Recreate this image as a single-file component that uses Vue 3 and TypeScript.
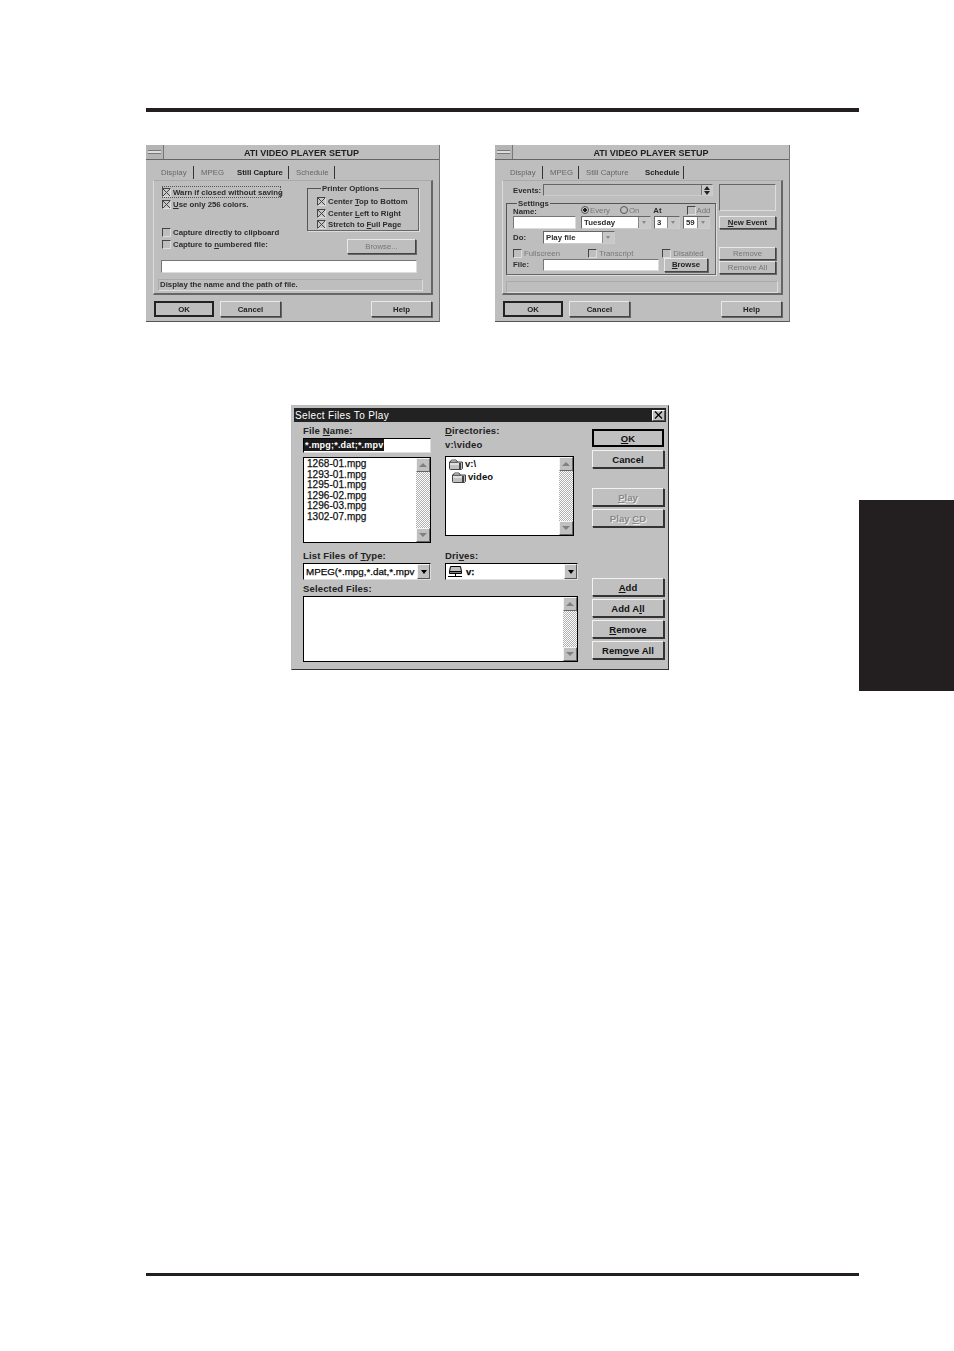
<script setup lang="ts">
const files: string[] = ['1268-01.mpg','1293-01.mpg','1295-01.mpg','1296-02.mpg','1296-03.mpg','1302-07.mpg']
</script>

<template>
  <div class="page">
    <div class="content">
      <div class="rule top-rule"></div>

      <div class="setup-row">
        <!-- Still capture -->
        <section class="setup">
          <header class="s-title"><span class="s-menu"><i></i></span><span class="s-caption">ATI VIDEO PLAYER SETUP</span></header>
          <nav class="s-tabs">
            <span class="tab t1">Display</span><span class="tab t2 plain">MPEG</span><span class="tab t3 on">Still Capture</span><span class="tab t4 last">Schedule</span>
          </nav>
          <div class="s-panel capture">
            <div class="cap-top">
              <div class="cap-left">
                <label class="chk focus"><b class="box x"></b>Warn if closed without saving</label>
                <label class="chk"><b class="box x"></b><span><u>U</u>se only 256 colors.</span></label>
                <div class="cap-space"></div>
                <label class="chk"><b class="box"></b>Capture directly to clipboard</label>
                <label class="chk"><b class="box"></b><span>Capture to <u>n</u>umbered file:</span></label>
              </div>
              <div class="cap-right">
                <fieldset class="group printer">
                  <legend>Printer Options</legend>
                  <label class="chk"><b class="box x"></b><span>Center <u>T</u>op to Bottom</span></label>
                  <label class="chk"><b class="box x"></b><span>Center <u>L</u>eft to Right</span></label>
                  <label class="chk"><b class="box x"></b><span>Stretch to <u>F</u>ull Page</span></label>
                </fieldset>
                <span class="s-btn browse dim">Browse...</span>
              </div>
            </div>
            <div class="field cap-field"></div>
            <div class="status">Display the name and the path of file.</div>
          </div>
          <footer class="s-foot"><span class="s-btn def w60">OK</span><span class="s-btn w61">Cancel</span><span class="spacer"></span><span class="s-btn w61">Help</span></footer>
        </section>

        <!-- Schedule -->
        <section class="setup second">
          <header class="s-title"><span class="s-menu"><i></i></span><span class="s-caption">ATI VIDEO PLAYER SETUP</span></header>
          <nav class="s-tabs">
            <span class="tab t1">Display</span><span class="tab t2">MPEG</span><span class="tab t3 plain">Still Capture</span><span class="tab t4 on last">Schedule</span>
          </nav>
          <div class="s-panel sched">
            <div class="sched-top">
              <div class="sched-main">
                <div class="events-row">
                  <span class="lab ev-lab">Events:</span>
                  <div class="events-box"><span class="drop"><svg width="6" height="9" viewBox="0 0 6 9"><path d="M3 0 6 4H0ZM3 9 0 5H6Z" fill="#222"/></svg></span></div>
                </div>
                <fieldset class="group settings">
                  <legend>Settings</legend>
                  <div class="set-heads">
                    <span class="lab name-lab">Name:</span>
                    <span class="radio on"></span><span class="lab dimt">Every</span>
                    <span class="radio"></span><span class="lab dimt">On</span>
                    <span class="lab at-lab">At</span>
                    <span class="box add-box"></span><span class="lab dimt">Add</span>
                  </div>
                  <div class="set-row r1">
                    <div class="field name-f"></div>
                    <div class="spin tue">Tuesday<i></i></div>
                    <div class="spin num">3<i></i></div>
                    <div class="spin num num2">59<i></i></div>
                  </div>
                  <div class="set-row r2">
                    <span class="lab do-lab">Do:</span>
                    <div class="spin play">Play file<i></i></div>
                  </div>
                  <div class="set-row r3">
                    <label class="chk dimt"><b class="box"></b>Fullscreen</label>
                    <label class="chk dimt tr"><b class="box"></b>Transcript</label>
                    <label class="chk dimt dis"><b class="box"></b>Disabled</label>
                  </div>
                  <div class="set-row r4">
                    <span class="lab do-lab">File:</span>
                    <div class="field file-f"></div>
                    <span class="s-btn br2"><span><u>B</u>rowse</span></span>
                  </div>
                </fieldset>
              </div>
              <aside class="sched-side">
                <div class="preview"></div>
                <span class="s-btn side-b"><span><u>N</u>ew Event</span></span>
                <span class="spacer"></span>
                <span class="s-btn side-b dim">Remove</span>
                <span class="s-btn side-b dim">Remove All</span>
              </aside>
            </div>
            <div class="status s2"></div>
          </div>
          <footer class="s-foot"><span class="s-btn def w60">OK</span><span class="s-btn w61">Cancel</span><span class="spacer"></span><span class="s-btn w61">Help</span></footer>
        </section>
      </div>

      <!-- File dialog -->
      <section class="fd">
        <header class="fd-title"><span>Select Files To Play</span><span class="fd-close">
          <svg width="9" height="8" viewBox="0 0 9 8"><path d="M1 .5 8 7.5M8 .5 1 7.5" stroke="#000" stroke-width="1.2" fill="none"/></svg>
        </span></header>
        <div class="fd-body">
          <div class="fd-main">
            <div class="fd-col c-file">
              <div class="fd-lab">File <u>N</u>ame:</div>
              <div class="fname"><span>*.mpg;*.dat;*.mpv</span></div>
              <div class="list l-file">
                <div class="list-txt"><div v-for="f in files" :key="f">{{ f }}</div></div>
                <div class="sb"><span class="sb-btn up"></span><span class="sb-track"></span><span class="sb-btn down"></span></div>
              </div>
            </div>
            <div class="fd-col c-dir">
              <div class="fd-lab"><u>D</u>irectories:</div>
              <div class="dir-path">v:\video</div>
              <div class="list l-dir">
                <div class="list-txt tree">
                  <div class="node"><svg width="14" height="11" viewBox="0 0 14 11"><path d="M.5 3V9.5Q.5 10.5 1.5 10.5H12.5L13.5 9.5V3Z" fill="#c0c0c0" stroke="#444"/><path d="M1 3 2.5 1H7L8.5 3Z" fill="#fff" stroke="#444"/><path d="M1 5H10" stroke="#fff"/><path d="M11 4V10" stroke="#444" stroke-width="2"/></svg>v:\</div>
                  <div class="node node-sub"><svg width="14" height="11" viewBox="0 0 14 11"><path d="M.5 3V9.5Q.5 10.5 1.5 10.5H12.5L13.5 9.5V3Z" fill="#c0c0c0" stroke="#444"/><path d="M1 3 2.5 1H7L8.5 3Z" fill="#fff" stroke="#444"/><path d="M1 5H10" stroke="#fff"/><path d="M11 4V10" stroke="#444" stroke-width="2"/></svg>video</div>
                </div>
                <div class="sb"><span class="sb-btn up"></span><span class="sb-track"></span><span class="sb-btn down"></span></div>
              </div>
            </div>
            <div class="fd-col c-file c-type">
              <div class="fd-lab">List Files of <u>T</u>ype:</div>
              <div class="combo"><span class="combo-txt mono">MPEG(*.mpg,*.dat,*.mpv</span><span class="combo-btn"></span></div>
            </div>
            <div class="fd-col c-dir c-type">
              <div class="fd-lab">Dri<u>v</u>es:</div>
              <div class="combo wide"><span class="combo-txt">
                <svg width="14" height="12" viewBox="0 0 14 12"><path d="M2.5.5H12.5L13.5 5.5H1.5Z" fill="#c0c0c0" stroke="#000"/><path d="M1.5 5.5H13.5V7.5H1.5Z" fill="#808080" stroke="#000"/><path d="M7.5 8V10M0 10.5H14" stroke="#000"/></svg>
                <b>v:</b></span><span class="combo-btn"></span></div>
            </div>
            <div class="c-sel">
              <div class="fd-lab">Selected Files:</div>
              <div class="list l-sel">
                <div class="list-txt"></div>
                <div class="sb"><span class="sb-btn up"></span><span class="sb-track"></span><span class="sb-btn down"></span></div>
              </div>
            </div>
          </div>
          <div class="fd-btns">
            <span class="w-btn default"><span><u>O</u>K</span></span>
            <span class="w-btn">Cancel</span>
            <span class="w-gap a"></span>
            <span class="w-btn off"><span><u>P</u>lay</span></span>
            <span class="w-btn off"><span>Play <u>C</u>D</span></span>
            <span class="w-gap b"></span>
            <span class="w-btn"><span><u>A</u>dd</span></span>
            <span class="w-btn"><span>Add A<u>l</u>l</span></span>
            <span class="w-btn"><span><u>R</u>emove</span></span>
            <span class="w-btn"><span>Rem<u>o</u>ve All</span></span>
          </div>
        </div>
      </section>

      <div class="rule bottom-rule"></div>
    </div>
    <aside class="side-tab"></aside>
  </div>
</template>

<style>
html, body { margin: 0; background: #fff; }
</style>

<style scoped>
.page { width: 954px; height: 1351px; display: flex; overflow: hidden; background: #fff; font-family: "Liberation Sans", Arial, sans-serif; color: #111; }
.content { width: 713px; margin-left: 146px; display: flex; flex-direction: column; }
.side-tab { width: 95px; height: 191px; margin-top: 500px; background: #231f20; }
.rule { height: 4px; background: #231f20; }
.top-rule { margin-top: 108px; }
.bottom-rule { height: 3px; margin-top: 603px; }
.spacer { flex: 1; }

.setup-row { display: flex; gap: 55px; margin-top: 33px; }
.setup { width: 294px; height: 177px; box-sizing: border-box; background: #bebebe; display: flex; flex-direction: column; border-right: 1px solid #777; border-bottom: 1px solid #555; font-size: 7.8px; filter: blur(.7px); }
.setup.second { width: 295px; }
.s-title { height: 15px; flex: none; display: flex; border-bottom: 1px solid #666; box-sizing: border-box; }
.s-menu { width: 17px; border-right: 1px solid #777; display: flex; align-items: center; justify-content: center; background: #b4b4b4; }
.s-menu i { width: 13px; height: 2px; background: #ddd; border-top: 1px solid #777; border-bottom: 1px solid #777; }
.s-caption { flex: 1; text-align: center; font-size: 9px; font-weight: 700; line-height: 16px; color: #222; }
.s-tabs { height: 20px; flex: none; display: flex; align-items: center; padding: 5px 0 0 15px; box-sizing: border-box; color: #666; }
.tab { margin-right: 7px; border-right: 1px solid #333; line-height: 13px; height: 13px; white-space: nowrap; box-sizing: content-box; }
.tab.t1 { width: 32px; }
.tab.t2 { width: 28px; }
.tab.t3 { width: 51px; }
.tab.t4 { width: 38px; margin-right: 0; }
.tab.on { color: #222; font-weight: 700; }
.tab.plain { border-right-color: transparent; }
.s-panel { margin: 0 6px 0 7px; height: 115px; box-sizing: border-box; border: 1px solid #777; border-right: 2px solid #666; border-bottom: 2px solid #666; border-top-color: #aaa; border-left-color: #ddd; }
.s-foot { display: flex; gap: 6px; margin-top: 6px; padding: 0 7px 0 8px; height: 16px; }
.s-btn { display: flex; align-items: center; justify-content: center; box-sizing: border-box; background: #bebebe; border: 1px solid #444; border-top-color: #e8e8e8; border-left-color: #e8e8e8; box-shadow: 1px 1px 0 #666; font-weight: 700; color: #222; white-space: nowrap; font-size: 7.8px; }
.s-btn.def { border: 2px solid #222; box-shadow: none; }
.w60 { width: 60px; }
.w61 { width: 61px; }
.dim { color: #777; font-weight: 400; }
.dimt { color: #666; }

.capture { padding: 5px 5px 0 8px; display: flex; flex-direction: column; }
.cap-top { display: flex; justify-content: space-between; height: 74px; }
.cap-left { display: flex; flex-direction: column; }
.cap-space { height: 16px; }
.chk { display: flex; align-items: center; gap: 2px; height: 12px; white-space: nowrap; font-weight: 700; color: #2c2c2c; }
.chk.focus { outline: 1px dotted #555; outline-offset: -1px; width: 119px; }
.chk.dimt { color: #777; font-weight: 400; }
.box { width: 9px; height: 9px; box-sizing: border-box; border: 1px solid #444; border-right-color: #ddd; border-bottom-color: #ddd; background: transparent; display: inline-block; flex: none; }
.box.x { background: linear-gradient(45deg, transparent 44%, #444 44% 56%, transparent 56%), linear-gradient(-45deg, transparent 44%, #444 44% 56%, transparent 56%), #c8c8c8; }
.cap-right { width: 119px; display: flex; flex-direction: column; align-items: flex-start; margin-top: -1px; }
.group { margin: 0; min-width: 0; box-sizing: border-box; border: 1px solid #555; border-right-color: #666; border-bottom-color: #666; box-shadow: 1px 1px 0 #ddd; }
.group legend { padding: 0 1px; font-weight: 700; font-size: 7.8px; line-height: 7px; margin-left: 4px; color: #2c2c2c; }
.printer { width: 112px; height: 46px; padding: 4px 0 0 9px; }
.printer .chk { height: 11.5px; }
.browse { width: 69px; height: 15px; margin: 8px 0 0 40px; font-weight: 400; }
.field { background: #fff; box-sizing: border-box; border: 1px solid #777; border-right-color: #ddd; border-bottom-color: #ddd; }
.cap-field { height: 13px; width: 256px; margin-left: -1px; }
.status { margin: 6px 0 0 -4px; width: 265px; height: 12px; box-sizing: border-box; border: 1px solid #aaa; border-right-color: #ddd; border-bottom-color: #ddd; line-height: 10px; padding-left: 1px; font-weight: 700; color: #2c2c2c; white-space: nowrap; }

.sched { padding: 3px 3px 0 8px; display: flex; flex-direction: column; }
.sched-top { display: flex; gap: 3px; height: 95px; margin-left: -5px; }
.sched-main { width: 210px; display: flex; flex-direction: column; }
.sched-side { width: 57px; display: flex; flex-direction: column; }
.events-row { display: flex; align-items: center; height: 12px; margin-bottom: 4px; }
.lab { font-weight: 700; color: #2c2c2c; }
.lab.dimt { color: #777; font-weight: 400; }
.ev-lab { width: 37px; padding-left: 7px; box-sizing: border-box; }
.events-box { width: 170px; height: 12px; box-sizing: border-box; border: 1px solid #666; border-right-color: #ccc; border-bottom-color: #ccc; display: flex; justify-content: flex-end; }
.drop { width: 10px; background: #c8c8c8; border-left: 1px solid #777; display: flex; align-items: center; justify-content: center; }
.settings { width: 210px; height: 75px; padding: 0 0 0 6px; }
.settings legend { margin-left: 4px; }
.set-heads { display: flex; align-items: center; height: 8px; margin-top: -1px; }
.name-lab { width: 68px; padding-top: 2px; }
.radio { width: 8px; height: 8px; box-sizing: border-box; border: 1px solid #555; border-radius: 50%; margin-right: 1px; flex: none; }
.radio.on { background: radial-gradient(circle, #222 0 45%, #c8c8c8 50%); }
.radio + .lab { margin-right: 10px; }
.at-lab { margin: 0 25px 0 4px; }
.add-box { margin-right: 1px; }
.set-row { display: flex; align-items: center; }
.r1 { height: 13px; margin-top: 2px; gap: 3px; }
.name-f { width: 63px; height: 13px; margin-right: 2px; }
.spin { height: 13px; box-sizing: border-box; background: #fff; border: 1px solid #666; border-right-color: #ccc; border-bottom-color: #ccc; padding-left: 2px; line-height: 11px; font-weight: 700; color: #2c2c2c; position: relative; }
.spin i { position: absolute; right: 0; top: 0; bottom: 0; width: 11px; background: #c8c8c8; border-left: 1px solid #888; }
.spin i::after { content: ""; position: absolute; left: 3px; top: 4px; border: 2px solid transparent; border-top: 3px solid #888; }
.tue { width: 70px; }
.num { width: 26px; }
.num2 { width: 27px; }
.r2 { height: 13px; margin-top: 2px; }
.do-lab { width: 30px; }
.play { width: 72px; }
.r3 { height: 10px; margin-top: 4px; }
.r3 .chk { height: 10px; }
.tr { margin-left: 28px; }
.dis { margin-left: 29px; }
.r4 { height: 15px; margin-top: -1px; }
.file-f { width: 116px; height: 12px; margin-right: 5px; }
.br2 { width: 44px; height: 14px; }
.preview { height: 27px; box-sizing: border-box; border: 1px solid #666; border-right-color: #ddd; border-bottom-color: #ddd; }
.side-b { height: 13px; flex: none; }
.side-b:nth-child(2) { margin-top: 5px; }
.side-b.dim + .side-b.dim { margin-top: 1px; }
.sched-side .spacer { flex: none; height: 18px; }
.s2 { width: 272px; margin: 3px 0 0 -5px; }

.fd { width: 378px; height: 265px; margin: 83px 0 0 145px; box-sizing: border-box; background: #c0c0c0; border: 1px solid #bbb; border-right-color: #333; border-bottom-color: #333; padding: 2px; font-size: 9.5px; color: #000; display: flex; flex-direction: column; }
.fd-title { height: 14px; background: #222; color: #fff; display: flex; align-items: center; justify-content: space-between; padding: 0 1px 0 1px; font-size: 10px; letter-spacing: .35px; flex: none; }
.fd-close { width: 13px; height: 11px; background: #c0c0c0; border: 1px solid #fff; border-right-color: #555; border-bottom-color: #555; box-sizing: border-box; display: flex; align-items: center; justify-content: center; overflow: hidden; }
.fd-body { display: flex; padding: 3px 0 0 9px; flex: 1; }
.fd-main { width: 276px; display: grid; grid-template-columns: 128px 133px; column-gap: 14px; grid-template-rows: 123px 35px auto; align-content: start; }
.fd-col { min-width: 0; }
.fd-lab { height: 12px; line-height: 12px; font-weight: 700; font-size: 9.5px; letter-spacing: .15px; color: #222; white-space: nowrap; }
.fname { margin-top: 1px; height: 15px; box-sizing: border-box; background: #fff; border: 1px solid #000; border-right-color: #ddd; border-bottom-color: #ddd; font-size: 9px; line-height: 12px; font-weight: 700; }
.fname span { background: #1a1a1a; color: #fff; display: inline-block; padding: 0 1px; letter-spacing: .2px; }
.list { background: #fff; box-sizing: border-box; border: 1px solid #000; display: flex; }
.l-file { height: 86px; margin-top: 4px; }
.l-dir { height: 80px; width: 129px; margin-top: 6px; }
.l-sel { height: 66px; width: 275px; margin-top: 1px; }
.list-txt { flex: 1; min-width: 0; padding: 1px 0 0 3px; font-size: 10px; line-height: 10.5px; font-weight: 400; letter-spacing: .05px; color: #111; -webkit-text-stroke: .25px #111; }
.sb { width: 14px; flex: none; display: flex; flex-direction: column; }
.sb-btn { height: 14px; flex: none; background: #c0c0c0; box-sizing: border-box; border: 1px solid #f4f4f4; border-right-color: #666; border-bottom-color: #666; display: flex; align-items: center; justify-content: center; }
.sb-btn::after { content: ""; border: 4px solid transparent; }
.sb-btn.up::after { border-bottom: 4px solid #808080; border-top: 0; }
.sb-btn.down::after { border-top: 4px solid #808080; border-bottom: 0; }
.sb-track { flex: 1; background-color: #fff; background-image: conic-gradient(#b0b0b0 25%, #fff 0 50%, #b0b0b0 0 75%, #fff 0); background-size: 2px 2px; }
.dir-path { height: 12px; line-height: 13px; margin-top: 1px; font-size: 9.5px; font-weight: 700; color: #222; letter-spacing: .2px; }
.tree { font-size: 9.5px; font-weight: 700; -webkit-text-stroke: 0; padding: 1px 0 0 3px; }
.node { display: flex; align-items: center; gap: 2px; height: 13px; }
.node-sub { padding-left: 3px; }
.c-type .fd-lab { margin-top: 2px; }
.combo { margin-top: 1px; height: 17px; box-sizing: border-box; background: #fff; border: 1px solid #000; border-right-color: #ddd; border-bottom-color: #ddd; display: flex; }
.combo.wide { width: 133px; }
.combo-txt { flex: 1; min-width: 0; white-space: nowrap; padding-left: 2px; font-size: 9.8px; line-height: 13px; letter-spacing: 0; -webkit-text-stroke: .25px #111; display: flex; align-items: center; gap: 3px; }
.combo-txt b { font-size: 9.5px; margin-left: 1px; }
.combo-btn { width: 13px; flex: none; background: #c0c0c0; border: 1px solid #f4f4f4; border-right-color: #555; border-bottom-color: #555; box-sizing: border-box; display: flex; align-items: center; justify-content: center; }
.combo-btn::after { content: ""; border: 3px solid transparent; border-top: 4px solid #000; border-bottom: 0; }
.c-sel { grid-column: 1 / 3; margin-top: 0; }
.fd-btns { width: 72px; margin-left: 13px; display: flex; flex-direction: column; gap: 3px; margin-top: 4px; }
.w-btn { height: 18px; flex: none; box-sizing: border-box; background: #c0c0c0; border: 1px solid #f2f2f2; border-right-color: #333; border-bottom-color: #333; box-shadow: 1px 1px 0 #333; font-size: 9.5px; font-weight: 700; letter-spacing: .05px; color: #111; display: flex; align-items: center; justify-content: center; white-space: nowrap; }
.w-btn.default { border: 2px solid #000; box-shadow: none; }
.w-btn.off { color: #888; text-shadow: 1px 1px 0 #eee; }
.w-gap.a { height: 14px; flex: none; }
.w-gap.b { height: 45px; flex: none; }
</style>
